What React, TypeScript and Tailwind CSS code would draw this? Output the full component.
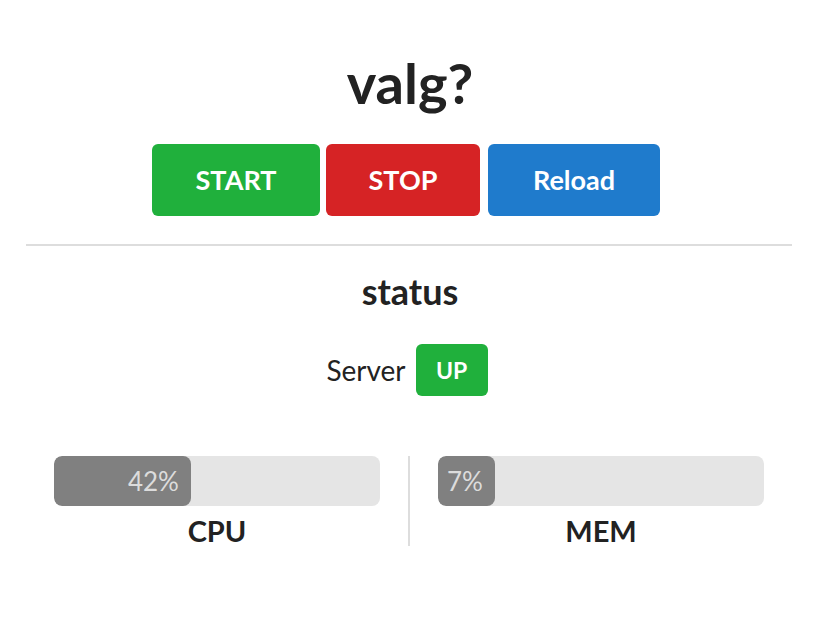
import React from 'react';

const stats = [
    { label: 'CPU', value: 42 },
    { label: 'MEM', value: 7 },
];

function Meter({ label, value }: { label: string; value: number }) {
    return (
        <div className="flex flex-1 flex-col items-center px-[28px]">
            <div className="flex h-[50px] w-full overflow-hidden rounded-[8px] bg-[#e5e5e5]">
                <div
                    className="flex h-full min-w-fit items-center justify-end rounded-[8px] bg-[#808080] pl-[9px] pr-[12px] text-[26px] text-[#dcdcdc]"
                    style={{ width: `${value}%` }}
                >
                    {value}%
                </div>
            </div>
            <div className="mt-[10px] text-[29px] font-bold leading-[30px] text-[#222]">{label}</div>
        </div>
    );
}

export default function App() {
    return (
        <div className="flex min-h-[636px] flex-col items-center bg-white pt-[55px] text-[#222]" style={{ fontFamily: 'Lato, "Open Sans", sans-serif' }}>
            <h1 className="text-[56px] font-bold leading-none">valg?</h1>

            <div className="mt-[33px] flex pr-[8px]">
                <button className="mr-[6px] flex h-[72px] w-[168px] items-center justify-center rounded-[6px] bg-[#20b03c] text-[27px] font-bold text-white">START</button>
                <button className="mr-[8px] flex h-[72px] w-[154px] items-center justify-center rounded-[6px] bg-[#d62325] text-[27px] font-bold text-white">STOP</button>
                <button className="flex h-[72px] w-[172px] items-center justify-center rounded-[6px] bg-[#1f7bcc] text-[27px] font-bold text-white">Reload</button>
            </div>

            <div className="mt-[28px] mr-[2px] h-[2px] w-[766px] bg-[#dddddd]" />

            <h2 className="mt-[25px] text-[36px] font-bold leading-[40px]">status</h2>

            <div className="mt-[33px] flex items-center gap-[10px] pr-[6px]">
                <span className="text-[28px]">Server</span>
                <span className="flex h-[52px] w-[72px] items-center justify-center rounded-[6px] bg-[#20b03c] text-[23px] font-bold text-white">UP</span>
            </div>

            <div className="mt-[60px] mr-[2px] flex w-[766px]">
                <Meter {...stats[0]} />
                <div className="w-[2px] self-stretch bg-[#dddddd]" />
                <Meter {...stats[1]} />
            </div>
        </div>
    );
}
